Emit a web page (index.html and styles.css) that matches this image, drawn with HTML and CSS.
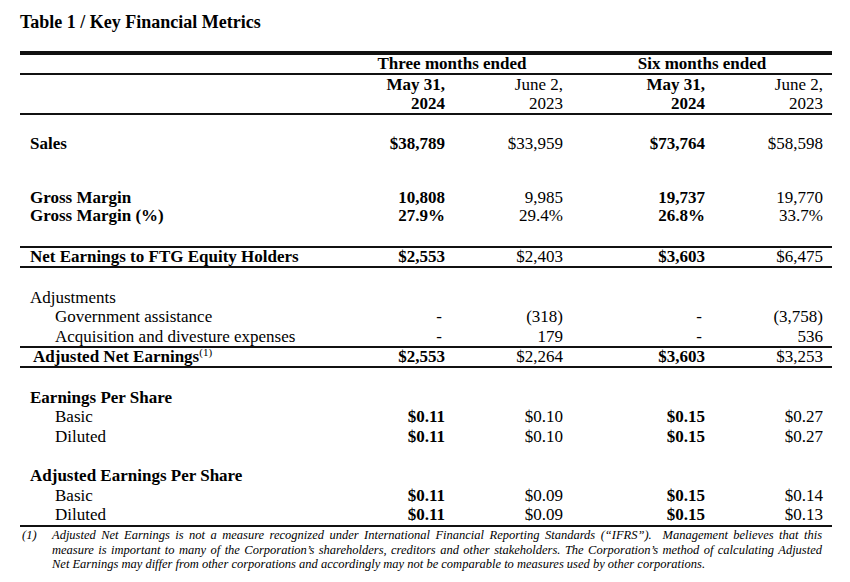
FILE: index.html
```html
<!DOCTYPE html>
<html>
<head>
<meta charset="utf-8">
<link rel="stylesheet" href="styles.css">
</head>
<body>
<div class="page">
  <h1 class="title">Table 1 / Key Financial Metrics</h1>
  <div class="table">
    <div class="row head rule-top">
      <div></div>
      <div class="span-a b">Three months ended</div>
      <div class="span-b b">Six months ended</div>
    </div>
    <div class="row head2 rule-top">
      <div></div>
      <div class="num b">May 31,</div>
      <div class="num">June 2,</div>
      <div class="num b">May 31,</div>
      <div class="num">June 2,</div>
    </div>
    <div class="row head2">
      <div></div>
      <div class="num b">2024</div>
      <div class="num">2023</div>
      <div class="num b">2024</div>
      <div class="num">2023</div>
    </div>
    <div class="row r rule-top sp-sales">
      <div class="lbl b">Sales</div>
      <div class="num b">$38,789</div>
      <div class="num">$33,959</div>
      <div class="num b">$73,764</div>
      <div class="num">$58,598</div>
    </div>
    <div class="row r tight sp-gm">
      <div class="lbl b">Gross Margin</div>
      <div class="num b">10,808</div>
      <div class="num">9,985</div>
      <div class="num b">19,737</div>
      <div class="num">19,770</div>
    </div>
    <div class="row r tight">
      <div class="lbl b">Gross Margin (%)</div>
      <div class="num b">27.9%</div>
      <div class="num">29.4%</div>
      <div class="num b">26.8%</div>
      <div class="num">33.7%</div>
    </div>
    <div class="row r ruled rule-top rule-bottom sp-net">
      <div class="lbl b">Net Earnings to FTG Equity Holders</div>
      <div class="num b">$2,553</div>
      <div class="num">$2,403</div>
      <div class="num b">$3,603</div>
      <div class="num">$6,475</div>
    </div>
    <div class="row r sp-block">
      <div class="lbl">Adjustments</div>
    </div>
    <div class="row r">
      <div class="lbl sub">Government assistance</div>
      <div class="num dash">-</div>
      <div class="num">(318)</div>
      <div class="num dash">-</div>
      <div class="num">(3,758)</div>
    </div>
    <div class="row r">
      <div class="lbl sub">Acquisition and divesture expenses</div>
      <div class="num dash">-</div>
      <div class="num">179</div>
      <div class="num dash">-</div>
      <div class="num">536</div>
    </div>
    <div class="row r ruled rule-top rule-bottom">
      <div class="lbl adj b">Adjusted Net Earnings<sup class="note">(1)</sup></div>
      <div class="num b">$2,553</div>
      <div class="num">$2,264</div>
      <div class="num b">$3,603</div>
      <div class="num">$3,253</div>
    </div>
    <div class="row r sp-eps">
      <div class="lbl b">Earnings Per Share</div>
    </div>
    <div class="row r">
      <div class="lbl sub">Basic</div>
      <div class="num b">$0.11</div>
      <div class="num">$0.10</div>
      <div class="num b">$0.15</div>
      <div class="num">$0.27</div>
    </div>
    <div class="row r">
      <div class="lbl sub">Diluted</div>
      <div class="num b">$0.11</div>
      <div class="num">$0.10</div>
      <div class="num b">$0.15</div>
      <div class="num">$0.27</div>
    </div>
    <div class="row r sp-block">
      <div class="lbl b">Adjusted Earnings Per Share</div>
    </div>
    <div class="row r">
      <div class="lbl sub">Basic</div>
      <div class="num b">$0.11</div>
      <div class="num">$0.09</div>
      <div class="num b">$0.15</div>
      <div class="num">$0.14</div>
    </div>
    <div class="row r rule-bottom">
      <div class="lbl sub">Diluted</div>
      <div class="num b">$0.11</div>
      <div class="num">$0.09</div>
      <div class="num b">$0.15</div>
      <div class="num">$0.13</div>
    </div>
  </div>
  <div class="footnote">
    <div class="fn-mark">(1)</div>
    <div class="fn-text">
      <div class="fn-line just">Adjusted Net Earnings is not a measure recognized under International Financial Reporting Standards (“IFRS”).&nbsp; Management believes that this</div>
      <div class="fn-line just">measure is important to many of the Corporation’s shareholders, creditors and other stakeholders. The Corporation’s method of calculating Adjusted</div>
      <div class="fn-line">Net Earnings may differ from other corporations and accordingly may not be comparable to measures used by other corporations.</div>
    </div>
  </div>
</div>
</body>
</html>
```

FILE: styles.css
```css
html, body {
  margin: 0;
  padding: 0;
  background: #ffffff;
}

body {
  font-family: "Liberation Serif", "Times New Roman", serif;
  color: #000000;
}

.page {
  width: 812px;
  padding: 12px 0 0 20px;
}

.title {
  margin: 0 0 19px 0;
  font-size: 18px;
  line-height: 20px;
  font-weight: bold;
}

.table {
  border-top: 2px solid #111111;
  font-size: 17px;
}

.row {
  display: grid;
  grid-template-columns: 314px 111px 118px 142px 118px 9px;
  align-items: center;
  white-space: nowrap;
}

.b {
  font-weight: bold;
}

.head {
  height: 18px;
  line-height: 18px;
}

.span-a {
  grid-column: 2 / 4;
  text-align: center;
  padding-left: 7px;
}

.span-b {
  grid-column: 4 / 7;
  text-align: center;
  padding-left: 9px;
}

.head2 {
  height: 19px;
  line-height: 19px;
}

.rule-top {
  border-top: 2px solid #111111;
}

.rule-bottom {
  border-bottom: 2px solid #111111;
}

.num {
  text-align: right;
}

.dash {
  padding-right: 3px;
}

.r {
  height: 19.5px;
  line-height: 19.5px;
}

.r.ruled {
  height: 18px;
  line-height: 18px;
}

.tight {
  height: 18px;
  line-height: 18px;
}

.lbl {
  padding-left: 10px;
}

.sub {
  padding-left: 35px;
}

.adj {
  padding-left: 13px;
}

.note {
  font-weight: normal;
  font-size: 11px;
  line-height: 0;
  vertical-align: 6px;
}

.sp-sales {
  padding-top: 19px;
  height: auto;
}

.sp-sales > div {
  line-height: 19.5px;
}

.sp-gm {
  margin-top: 35.5px;
}

.sp-net {
  margin-top: 20.5px;
}

.sp-block {
  margin-top: 20px;
}

.sp-eps {
  margin-top: 19.5px;
}

.footnote {
  display: flex;
  margin-top: 1.5px;
  font-style: italic;
  font-size: 12.5px;
  line-height: 14.5px;
}

.fn-mark {
  width: 32px;
  padding-left: 2px;
  box-sizing: border-box;
}

.fn-text {
  width: 770px;
}

.fn-line {
  white-space: nowrap;
}

.fn-line.just {
  white-space: normal;
  text-align: justify;
  text-align-last: justify;
}
```
